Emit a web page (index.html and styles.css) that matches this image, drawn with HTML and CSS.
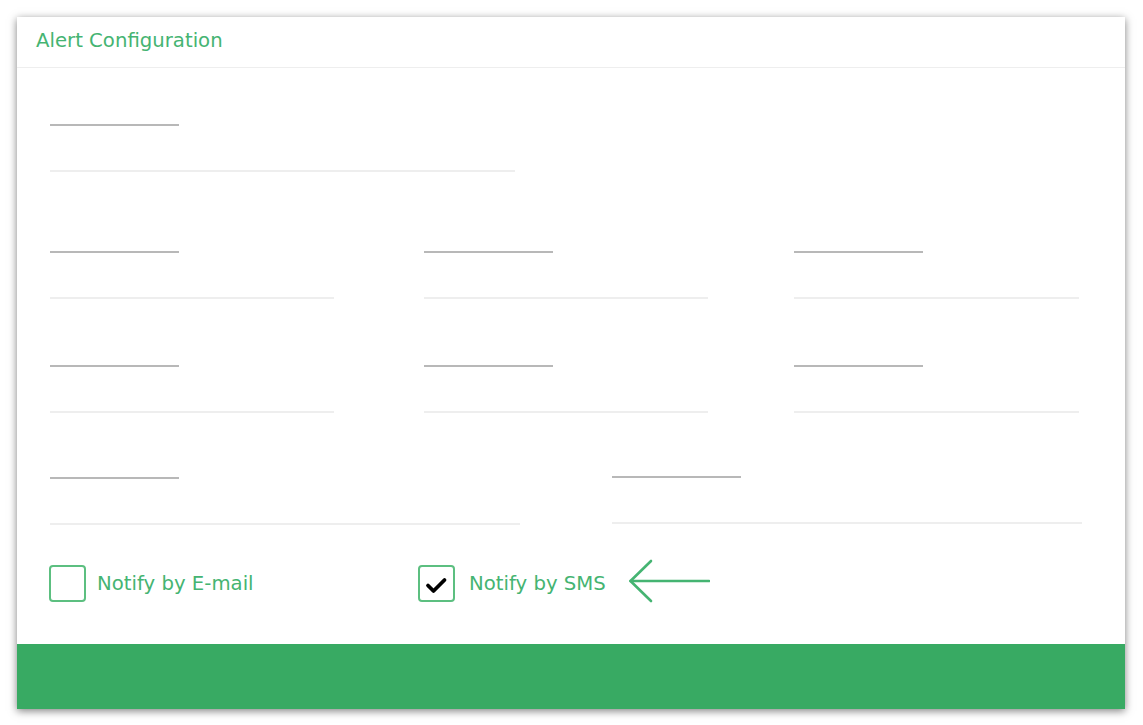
FILE: index.html
```html
<!DOCTYPE html>
<html>
<head>
<meta charset="utf-8">
<link rel="stylesheet" href="styles.css">
</head>
<body>
<div class="page">
  <div class="card">
    <div class="card-header">Alert Configuration</div>
    <div class="card-body">
      <div class="row row-1">
        <div class="field field-wide"><div class="label"></div><div class="input"></div></div>
      </div>
      <div class="row row-3col row-2">
        <div class="field"><div class="label"></div><div class="input"></div></div>
        <div class="field"><div class="label"></div><div class="input"></div></div>
        <div class="field field-last"><div class="label"></div><div class="input"></div></div>
      </div>
      <div class="row row-3col row-3">
        <div class="field"><div class="label"></div><div class="input"></div></div>
        <div class="field"><div class="label"></div><div class="input"></div></div>
        <div class="field field-last"><div class="label"></div><div class="input"></div></div>
      </div>
      <div class="row row-2col row-4">
        <div class="field"><div class="label"></div><div class="input"></div></div>
        <div class="field field-up"><div class="label"></div><div class="input"></div></div>
      </div>
      <div class="checks">
        <label class="check check-email">
          <span class="box"></span>
          <span class="check-text">Notify by E-mail</span>
        </label>
        <label class="check check-sms">
          <span class="box">
            <svg width="33" height="33" viewBox="0 0 33 33"><polyline points="8,18.5 13.5,24 24.5,13" fill="none" stroke="#000" stroke-width="3.8" stroke-linecap="round" stroke-linejoin="round"/></svg>
          </span>
          <span class="check-text">Notify by SMS</span>
          <svg class="arrow" width="82" height="44" viewBox="0 0 82 44"><line x1="2.5" y1="22" x2="81" y2="22" stroke="#45b472" stroke-width="2.6" stroke-linecap="round"/><polyline points="23,2 2.5,22 23,42" fill="none" stroke="#45b472" stroke-width="2.6" stroke-linecap="round" stroke-linejoin="round"/></svg>
        </label>
      </div>
    </div>
    <div class="card-footer"></div>
  </div>
</div>
</body>
</html>
```

FILE: styles.css
```css
html, body {
  margin: 0;
  padding: 0;
  background: #ffffff;
  font-family: "DejaVu Sans", Verdana, sans-serif;
}

.page {
  padding: 17px 18px 16px 17px;
}

.card {
  background: #ffffff;
  box-shadow: 0 2px 8px rgba(0, 0, 0, 0.5);
}

.card-header {
  height: 51px;
  box-sizing: border-box;
  padding-left: 19px;
  padding-bottom: 3px;
  display: flex;
  align-items: center;
  color: #45b472;
  font-size: 19.7px;
  border-bottom: 1px solid #eeeeee;
}

.card-body {
  padding: 56px 43px 41px 33px;
}

.row-2 { margin-top: 79px; }
.row-3 { margin-top: 66px; }
.row-4 { margin-top: 64px; }

.row-3col {
  display: grid;
  grid-template-columns: 374px 370px 285px;
}

.row-3col .field {
  width: 284px;
}

.row-3col .field-last {
  width: 285px;
}

.row-2col {
  display: grid;
  grid-template-columns: 470px 470px;
  column-gap: 92px;
}

.field-wide {
  width: 465px;
}

.field-up {
  margin-top: -1px;
}

.label {
  width: 129px;
  height: 2px;
  background: #b8b8b8;
}

.input {
  margin-top: 44px;
  height: 2px;
  background: #eeeeee;
}

.checks {
  margin-top: 39px;
  display: flex;
  align-items: center;
}

.check {
  display: flex;
  align-items: center;
  color: #45b472;
  font-size: 19.7px;
}

.check-email {
  margin-left: -1px;
  width: 369px;
}

.box {
  width: 37px;
  height: 37px;
  box-sizing: border-box;
  border: 2px solid #5cbf80;
  border-radius: 4px;
  display: flex;
  align-items: center;
  justify-content: center;
}

.check-email .check-text {
  margin-left: 11px;
}

.check-sms .check-text {
  margin-left: 14px;
}

.arrow {
  margin-left: 22px;
  margin-top: -5px;
}

.card-footer {
  height: 65px;
  background: #38aa63;
}
```
